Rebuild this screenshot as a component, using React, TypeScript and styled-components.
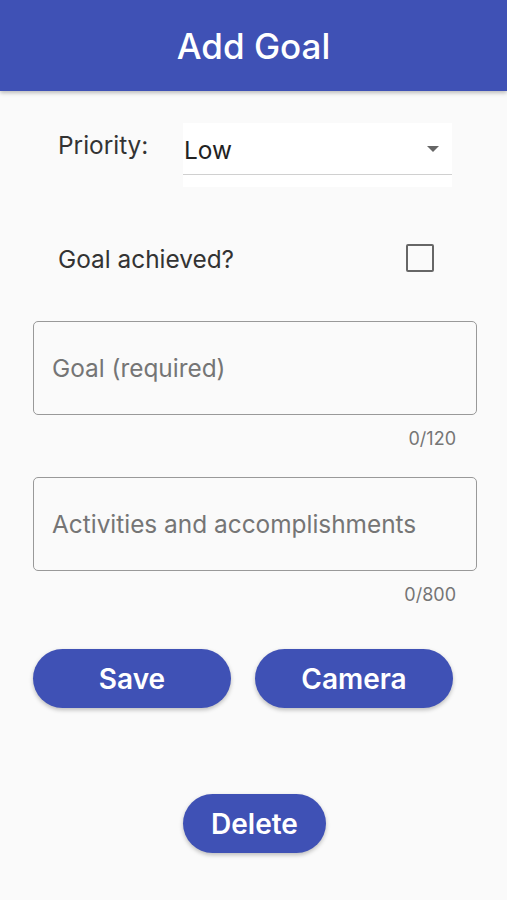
import { useState } from 'react';
import { styled, createGlobalStyle } from 'styled-components';

const GlobalStyle = createGlobalStyle`
    body {
        margin: 0;
        background: #fafafa;
        font-family: Inter, "Noto Sans", sans-serif;
    }
`;

const App = () => {
    const [achieved, setAchieved] = useState(false);

    return (
        <>
            <GlobalStyle />
            <Page>
                <Header>Add Goal</Header>
                <Form>
                    <PriorityRow>
                        <Label>Priority:</Label>
                        <Dropdown>
                            <Select>
                                <span>Low</span>
                                <Arrow />
                            </Select>
                        </Dropdown>
                    </PriorityRow>
                    <CheckRow>
                        <Label>Goal achieved?</Label>
                        <CheckBox $checked={achieved} onClick={() => setAchieved(!achieved)} />
                    </CheckRow>
                    <Field $top={41}>Goal (required)</Field>
                    <Counter>0/120</Counter>
                    <Field $top={28}>Activities and accomplishments</Field>
                    <Counter>0/800</Counter>
                    <ButtonRow>
                        <Button $width={198}>Save</Button>
                        <Button $width={198}>Camera</Button>
                    </ButtonRow>
                    <DeleteRow>
                        <Button $width={143}>Delete</Button>
                    </DeleteRow>
                </Form>
            </Page>
        </>
    );
};

export default App;

const Page = styled.div`
    min-height: 900px;
    background: #fafafa;
`;

const Header = styled.header`
    height: 91px;
    background: #3f51b5;
    box-shadow: 0 2px 4px rgba(0, 0, 0, 0.25);
    display: flex;
    align-items: center;
    justify-content: center;
    color: #fff;
    font-size: 35px;
    font-weight: 500;
`;

const Form = styled.div`
    display: flex;
    flex-direction: column;
    padding: 32px 30px 0 33px;
`;

const PriorityRow = styled.div`
    display: flex;
    align-items: flex-start;
    padding-left: 25px;
    height: 64px;
`;

const Label = styled.div`
    width: 125px;
    padding-top: 7px;
    font-size: 24.4px;
    line-height: 30px;
    color: #333;
    white-space: nowrap;
`;

const Dropdown = styled.div`
    width: 269px;
    height: 64px;
    background: #fff;
`;

const Select = styled.div`
    height: 52px;
    display: flex;
    align-items: center;
    justify-content: space-between;
    padding: 2px 13px 0 1px;
    box-sizing: border-box;
    border-bottom: 1px solid #d0d0d0;
    font-size: 24.4px;
    color: #222;
`;

const Arrow = styled.span`
    width: 0;
    height: 0;
    border-left: 6px solid transparent;
    border-right: 6px solid transparent;
    border-top: 6px solid #666;
    margin-top: -2px;
`;

const CheckRow = styled.div`
    display: flex;
    align-items: center;
    justify-content: space-between;
    height: 44px;
    margin-top: 49px;
    padding: 0 43px 0 25px;

    ${Label} {
        padding-top: 1px;
    }
`;

const CheckBox = styled.div<{ $checked: boolean }>`
    width: 28px;
    height: 28px;
    box-sizing: border-box;
    border: 2.5px solid #666;
    border-radius: 2px;
    background: ${({ $checked }) => ($checked ? '#3f51b5' : 'transparent')};
    cursor: pointer;
`;

const Field = styled.div<{ $top: number }>`
    margin-top: ${({ $top }) => $top}px;
    height: 94px;
    box-sizing: border-box;
    border: 1.5px solid #999;
    border-radius: 5px;
    display: flex;
    align-items: center;
    padding-left: 18px;
    font-size: 24.4px;
    color: #757575;
`;

const Counter = styled.div`
    margin-top: 14px;
    padding-right: 21px;
    text-align: right;
    font-size: 18px;
    line-height: 20px;
    color: #757575;
`;

const ButtonRow = styled.div`
    display: flex;
    gap: 24px;
    margin-top: 44px;
`;

const DeleteRow = styled.div`
    display: flex;
    justify-content: center;
    margin-top: 86px;
    padding-right: 1px;
`;

const Button = styled.button<{ $width: number }>`
    width: ${({ $width }) => $width}px;
    height: 59px;
    border: none;
    border-radius: 30px;
    background: #3f51b5;
    color: #fff;
    font-family: Inter, "Noto Sans", sans-serif;
    font-size: 28px;
    font-weight: 600;
    box-shadow: 0 2px 4px rgba(0, 0, 0, 0.25);
    cursor: pointer;
`;
